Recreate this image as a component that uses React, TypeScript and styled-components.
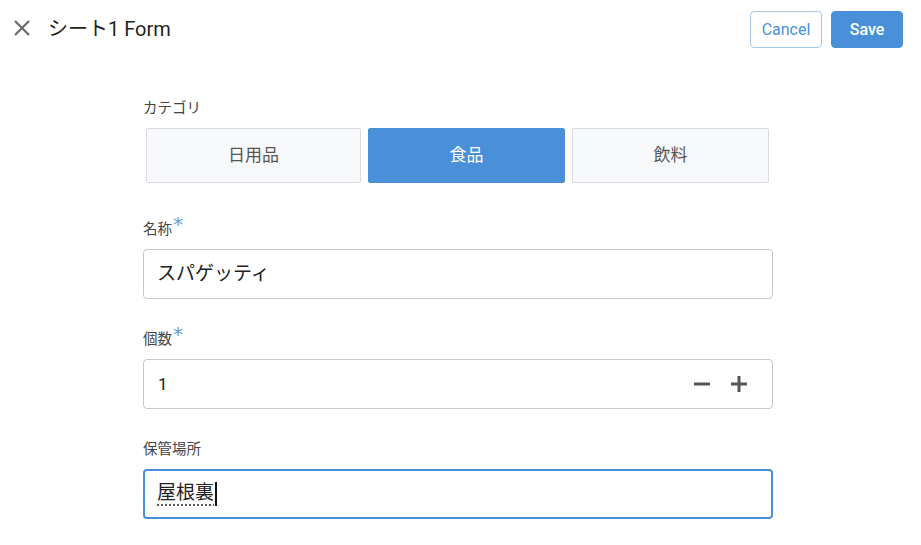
import React from "react";
import styled, { createGlobalStyle } from "styled-components";

const Global = createGlobalStyle`
  html, body { margin: 0; padding: 0; background: #fff; }
  body { font-family: Roboto, "Noto Sans CJK JP", sans-serif; }
  * { box-sizing: border-box; }
`;

const Page = styled.div`
  width: 921px;
  height: 545px;
  overflow: hidden;
  background: #fff;
`;

const Header = styled.header`
  display: flex;
  align-items: center;
  height: 58px;
  padding: 0 18px 0 12px;
`;

const CloseBtn = styled.button`
  width: 20px;
  height: 20px;
  padding: 0;
  margin-bottom: 2px;
  border: none;
  background: none;
  display: flex;
  align-items: center;
  justify-content: center;
  color: #6b6b6b;
`;

const Title = styled.h1`
  margin: 0 0 3px 16px;
  font-size: 20px;
  font-weight: 400;
  color: #222;
  flex: 1;
`;

const Btn = styled.button<{ $primary?: boolean }>`
  height: 37px;
  width: 72px;
  margin-left: 9px;
  border-radius: 4px;
  font-family: Roboto, sans-serif;
  font-size: 16px;
  font-weight: ${(p) => (p.$primary ? 500 : 400)};
  border: 1px solid ${(p) => (p.$primary ? "#4a90d9" : "#a9c8ee")};
  background: ${(p) => (p.$primary ? "#4a90d9" : "#fff")};
  color: ${(p) => (p.$primary ? "#fff" : "#4a90d9")};
`;

const Form = styled.div`
  width: 630px;
  margin: 39px 0 0 143px;
  display: flex;
  flex-direction: column;
`;

const Label = styled.div`
  font-family: "Noto Sans CJK JP", sans-serif;
  font-size: 14.5px;
  color: #444;
  height: 20px;
  line-height: 20px;
  margin-bottom: 11px;
  display: flex;
  align-items: flex-start;
`;

const Star = styled.span`
  color: #6a9ad6;
  font-family: "DejaVu Sans", sans-serif;
  font-size: 20px;
  line-height: 18px;
  margin-left: 1px;
  margin-top: -3px;
`;

const Segments = styled.div`
  display: flex;
  gap: 7px;
  padding-left: 3px;
  margin-bottom: 35px;
`;

const Segment = styled.div<{ $active?: boolean; $w: number }>`
  width: ${(p) => p.$w}px;
  height: 55px;
  padding-bottom: 5px;
  display: flex;
  align-items: center;
  justify-content: center;
  border-radius: 2px;
  font-family: "Noto Sans CJK JP", sans-serif;
  font-size: 17px;
  border: 1px solid ${(p) => (p.$active ? "#4a90d9" : "#d9dbe0")};
  background: ${(p) => (p.$active ? "#4a90d9" : "#f7f8fa")};
  color: ${(p) => (p.$active ? "#fff" : "#555")};
`;

const Field = styled.div<{ $focus?: boolean }>`
  height: 50px;
  border-radius: 4px;
  border: ${(p) => (p.$focus ? "2px solid #4a90d9" : "1px solid #c6c8cc")};
  padding: 0 ${(p) => (p.$focus ? 12 : 13)}px;
  display: flex;
  align-items: center;
  font-family: "Noto Sans CJK JP", sans-serif;
  font-size: 19px;
  color: #222;
  margin-bottom: 29px;
`;

const Value = styled.span`
  flex: 1;
  display: flex;
  align-items: center;
`;

const JpText = styled.span`
  margin-bottom: 5px;
`;

const Underlined = styled.span`
  text-decoration: underline dotted #555;
  text-underline-offset: 5px;
`;

const Caret = styled.span`
  display: inline-block;
  width: 2px;
  height: 24px;
  background: #111;
  margin-left: 1px;
  vertical-align: middle;
`;

const Steppers = styled.div`
  display: flex;
  gap: 19px;
  margin-right: 11px;
  color: #555;
`;

const NumText = styled.span`
  font-family: Roboto, sans-serif;
  font-size: 17px;
  margin-left: 1px;
`;

export default function App() {
  return (
    <Page>
      <Global />
      <Header>
        <CloseBtn aria-label="close">
          <svg width="18" height="18" viewBox="0 0 18 18">
            <path d="M2 2 L16 16 M16 2 L2 16" stroke="#6b6b6b" strokeWidth="2.2" />
          </svg>
        </CloseBtn>
        <Title>シート1 Form</Title>
        <Btn>Cancel</Btn>
        <Btn $primary>Save</Btn>
      </Header>
      <Form>
        <Label>カテゴリ</Label>
        <Segments>
          <Segment $w={215}>日用品</Segment>
          <Segment $w={197} $active>食品</Segment>
          <Segment $w={197}>飲料</Segment>
        </Segments>
        <Label>
          名称<Star>*</Star>
        </Label>
        <Field>
          <Value>
            <JpText>スパゲッティ</JpText>
          </Value>
        </Field>
        <Label>
          個数<Star>*</Star>
        </Label>
        <Field>
          <Value>
            <NumText>1</NumText>
          </Value>
          <Steppers>
            <svg width="18" height="18" viewBox="0 0 18 18">
              <path d="M1 9 H17" stroke="#555" strokeWidth="3" />
            </svg>
            <svg width="18" height="18" viewBox="0 0 18 18">
              <path d="M1 9 H17 M9 1 V17" stroke="#555" strokeWidth="3" />
            </svg>
          </Steppers>
        </Field>
        <Label>保管場所</Label>
        <Field $focus>
          <Value>
            <JpText>
              <Underlined>屋根裏</Underlined>
              <Caret />
            </JpText>
          </Value>
        </Field>
      </Form>
    </Page>
  );
}
